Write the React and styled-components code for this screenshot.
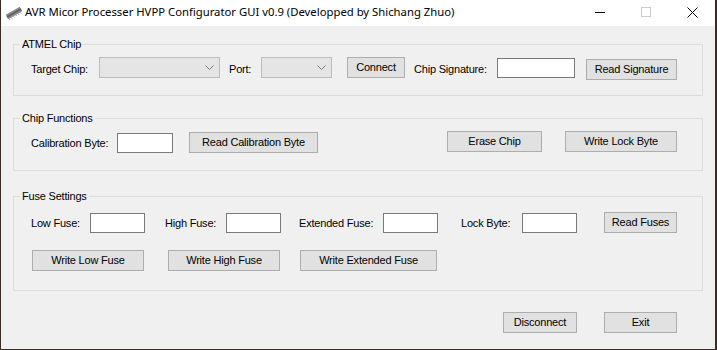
import React from 'react'
import styled, { createGlobalStyle } from 'styled-components'

const GlobalStyle = createGlobalStyle`
  html, body {
    margin: 0;
    padding: 0;
    background: #3b2b25;
  }
  body {
    font-family: "Liberation Sans", Arial, sans-serif;
    font-size: 11px;
    letter-spacing: -0.2px;
    color: #000;
  }
`

const Window = styled.div`
  width: 714px;
  height: 349px;
  margin-left: 1px;
  background: #f0f0f0;
  display: flex;
  flex-direction: column;
  overflow: hidden;
`

const TitleBar = styled.div`
  height: 26px;
  background: #fff;
  display: flex;
  align-items: center;
  flex-shrink: 0;
`

const AppIcon = styled.div`
  width: 24px;
  height: 26px;
  display: flex;
  align-items: center;
  justify-content: flex-start;
  padding-left: 4px;
  box-sizing: border-box;
`

const Title = styled.div`
  font-family: "Noto Sans", "Open Sans", sans-serif;
  font-size: 11.3px;
  letter-spacing: 0;
  line-height: 26px;
  white-space: nowrap;
  flex: 1;
  padding-bottom: 2px;
`

const CaptionButton = styled.div`
  width: 46px;
  height: 26px;
  display: flex;
  align-items: center;
  justify-content: center;
  padding-bottom: 2px;
  box-sizing: border-box;
`

const Body = styled.div`
  padding: 0 12px;
  display: flex;
  flex-direction: column;
`

const Group = styled.div`
  position: relative;
  box-sizing: border-box;
  border: 1px solid #dcdcdc;
  height: ${p => p.$h}px;
  margin-top: ${p => p.$mt}px;
`

const Legend = styled.span`
  position: absolute;
  top: -8px;
  left: 6px;
  padding: 0 2px;
  background: #f0f0f0;
  line-height: 14px;
  white-space: nowrap;
`

const Row = styled.div`
  display: flex;
  align-items: flex-start;
  margin-top: ${p => p.$mt || 0}px;
  justify-content: ${p => (p.$end ? 'flex-end' : 'flex-start')};
  padding-right: ${p => p.$pr || 0}px;
`

const Label = styled.span`
  width: ${p => p.$w}px;
  margin-left: ${p => p.$ml || 0}px;
  margin-top: ${p => p.$mt}px;
  line-height: 13px;
  white-space: nowrap;
  flex-shrink: 0;
`

const TextBox = styled.div`
  box-sizing: border-box;
  width: ${p => p.$w}px;
  height: 20px;
  margin-left: ${p => p.$ml || 0}px;
  margin-top: ${p => p.$mt}px;
  background: #fff;
  border: 1px solid #7a7a7a;
  flex-shrink: 0;
`

const Combo = styled.div`
  box-sizing: border-box;
  width: ${p => p.$w}px;
  height: 21px;
  margin-top: ${p => p.$mt}px;
  background: #e5e5e5;
  border: 1px solid #bcbcbc;
  display: flex;
  align-items: center;
  justify-content: flex-end;
  padding-right: 5px;
  flex-shrink: 0;
`

const Button = styled.button`
  box-sizing: border-box;
  width: ${p => p.$w}px;
  height: ${p => p.$h || 21}px;
  margin: ${p => p.$mt || 0}px 0 0 ${p => p.$ml || 0}px;
  padding: 0;
  background: #e1e1e1;
  border: 1px solid #adadad;
  border-radius: 0;
  font-family: "Liberation Sans", Arial, sans-serif;
  font-size: 11px;
  letter-spacing: -0.2px;
  color: #000;
  line-height: 13px;
  flex-shrink: 0;
`

const Chevron = () => (
  <svg width="9" height="5" viewBox="0 0 9 5">
    <polyline points="0.5,0.5 4.5,4.5 8.5,0.5" fill="none" stroke="#7a7a7a" strokeWidth="1" />
  </svg>
)

const ChipIcon = () => (
  <svg width="18" height="14" viewBox="0 0 18 14">
    <line x1="2" y1="11" x2="16" y2="3" stroke="#8a8a8a" strokeWidth="5" />
    <line x1="2" y1="11" x2="16" y2="3" stroke="#5e5e5e" strokeWidth="1.5" />
    {[0, 1, 2, 3, 4, 5].map(i => (
      <line
        key={i}
        x1={4 + i * 2.2}
        y1={12.8 - i * 1.3}
        x2={5.2 + i * 2.2}
        y2={14 - i * 1.3}
        stroke="#9a9a9a"
        strokeWidth="1"
      />
    ))}
  </svg>
)

export default function App() {
  return (
    <>
      <GlobalStyle />
      <Window>
        <TitleBar>
          <AppIcon>
            <ChipIcon />
          </AppIcon>
          <Title>AVR Micor Processer HVPP Configurator GUI v0.9 (Developped by Shichang Zhuo)</Title>
          <CaptionButton>
            <svg width="10" height="10" viewBox="0 0 10 10">
              <line x1="0" y1="5.5" x2="10" y2="5.5" stroke="#000" strokeWidth="1" />
            </svg>
          </CaptionButton>
          <CaptionButton>
            <svg width="10" height="10" viewBox="0 0 10 10">
              <rect x="0.5" y="0.5" width="9" height="9" fill="none" stroke="#cccccc" strokeWidth="1" />
            </svg>
          </CaptionButton>
          <CaptionButton>
            <svg width="11" height="11" viewBox="0 0 11 11">
              <path d="M0.5 0.5 L10.5 10.5 M10.5 0.5 L0.5 10.5" stroke="#000" strokeWidth="1" />
            </svg>
          </CaptionButton>
        </TitleBar>

        <Body>
          <Group $h={52} $mt={18}>
            <Legend>ATMEL Chip</Legend>
            <Row>
              <Label $w={68} $ml={17} $mt={18}>Target Chip:</Label>
              <Combo $w={121} $mt={12}><Chevron /></Combo>
              <Label $w={32} $ml={9} $mt={18}>Port:</Label>
              <Combo $w={71} $mt={12}><Chevron /></Combo>
              <Button $w={58} $ml={15} $mt={12}>Connect</Button>
              <Label $w={83} $ml={9} $mt={18}>Chip Signature:</Label>
              <TextBox $w={78} $mt={13} />
              <Button $w={91} $ml={11} $mt={14}>Read Signature</Button>
            </Row>
          </Group>

          <Group $h={53} $mt={22}>
            <Legend>Chip Functions</Legend>
            <Row>
              <Label $w={86} $ml={17} $mt={18}>Calibration Byte:</Label>
              <TextBox $w={56} $mt={14} />
              <Button $w={129} $ml={16} $mt={13}>Read Calibration Byte</Button>
              <Button $w={95} $ml={129} $mt={12}>Erase Chip</Button>
              <Button $w={112} $ml={23} $mt={12}>Write Lock Byte</Button>
            </Row>
          </Group>

          <Group $h={95} $mt={25}>
            <Legend>Fuse Settings</Legend>
            <Row>
              <Label $w={59} $ml={17} $mt={20}>Low Fuse:</Label>
              <TextBox $w={55} $mt={16} />
              <Label $w={61} $ml={20} $mt={20}>High Fuse:</Label>
              <TextBox $w={55} $mt={16} />
              <Label $w={84} $ml={18} $mt={20}>Extended Fuse:</Label>
              <TextBox $w={55} $mt={16} />
              <Label $w={61} $ml={23} $mt={20}>Lock Byte:</Label>
              <TextBox $w={55} $mt={16} />
              <Button $w={73} $ml={27} $mt={15}>Read Fuses</Button>
            </Row>
            <Row $mt={17}>
              <Button $w={112} $ml={18}>Write Low Fuse</Button>
              <Button $w={112} $ml={24}>Write High Fuse</Button>
              <Button $w={137} $ml={20}>Write Extended Fuse</Button>
            </Row>
          </Group>

          <Row $mt={21} $end $pr={26}>
            <Button $w={74}>Disconnect</Button>
            <Button $w={73} $ml={27}>Exit</Button>
          </Row>
        </Body>
      </Window>
    </>
  )
}
